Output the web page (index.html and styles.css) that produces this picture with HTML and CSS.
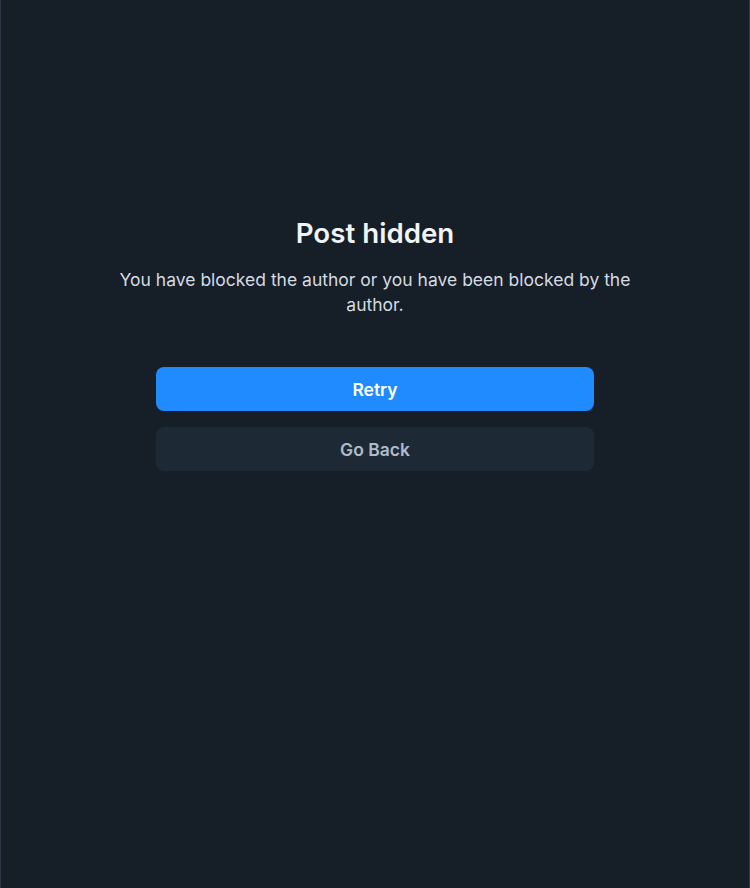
FILE: index.html
```html
<!DOCTYPE html>
<html lang="en">
<head>
    <meta charset="UTF-8">
    <meta name="viewport" content="width=device-width, initial-scale=1.0">
    <title>Post hidden</title>
    <link rel="stylesheet" href="styles.css">
</head>
<body>
    <main class="screen">
        <div class="notice">
            <h1 class="notice-title">Post hidden</h1>
            <p class="notice-text">You have blocked the author or you have been blocked by the author.</p>
            <div class="actions">
                <button class="btn btn-primary">Retry</button>
                <button class="btn btn-secondary">Go Back</button>
            </div>
        </div>
    </main>
</body>
</html>
```

FILE: styles.css
```css
body {
    margin: 0;
    padding: 0;
    background-color: #161e27;
    font-family: Inter, "Noto Sans", sans-serif;
    color: #f1f3f5;
}

.screen {
    min-height: 888px;
    box-sizing: border-box;
    border-left: 1px solid #2c3846;
    border-right: 1px solid #2c3846;
    display: flex;
    justify-content: center;
    padding-top: 213px;
}

.notice {
    display: flex;
    flex-direction: column;
    align-items: center;
    text-align: center;
    width: 530px;
}

.notice-title {
    margin: 0;
    font-size: 27.7px;
    font-weight: 600;
    line-height: 40px;
    color: #f1f3f5;
}

.notice-text {
    margin: 14px 0 0;
    font-size: 17.5px;
    line-height: 25px;
    color: #d4dbe2;
}

.actions {
    display: flex;
    flex-direction: column;
    gap: 16px;
    width: 438px;
    margin-top: 50px;
}

.btn {
    height: 44px;
    border: none;
    border-radius: 8px;
    font-family: Inter, "Noto Sans", sans-serif;
    font-size: 17.5px;
    font-weight: 600;
    padding-top: 2px;
    cursor: pointer;
}

.btn-primary {
    background-color: #208bfe;
    color: #ffffff;
}

.btn-secondary {
    background-color: #1e2936;
    color: #aebbc9;
}
```
